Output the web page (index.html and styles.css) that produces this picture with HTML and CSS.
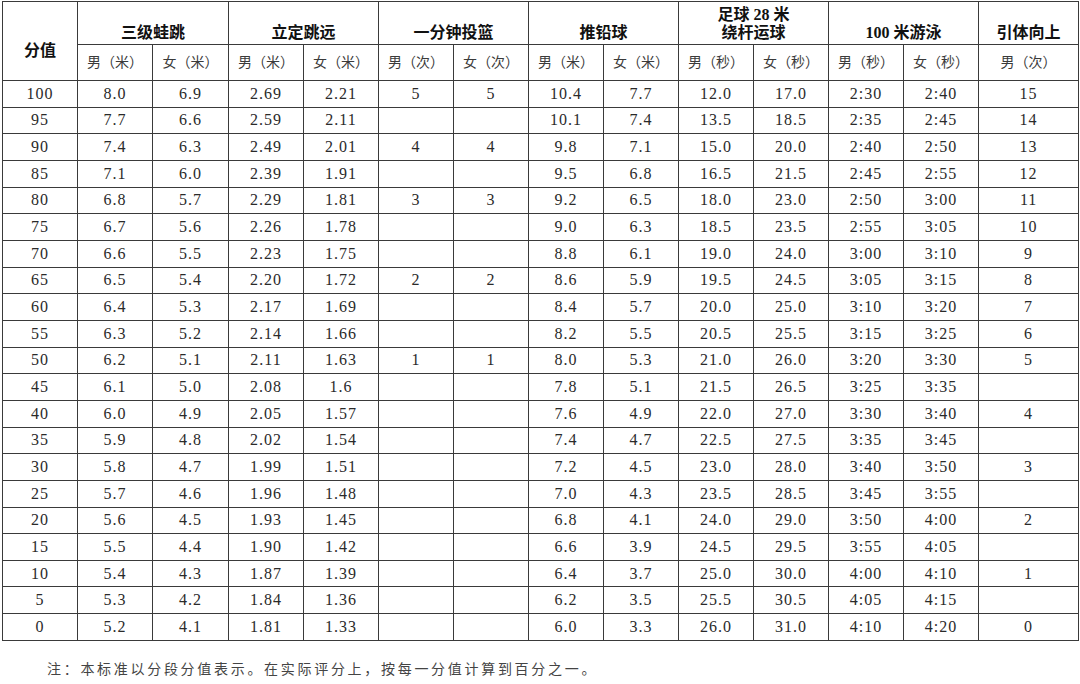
FILE: index.html
```html
<!DOCTYPE html>
<html lang="zh-CN">
<head>
<meta charset="utf-8">
<title>评分标准</title>
<link rel="stylesheet" href="styles.css">
</head>
<body>
<div class="page">
<table class="score">
  <colgroup>
    <col class="c75"><col class="c75"><col class="c76"><col class="c75"><col class="c75"><col class="c75"><col class="c75"><col class="c75"><col class="c75"><col class="c75"><col class="c75"><col class="c75"><col class="c75"><col class="c100">
  </colgroup>
  <thead>
    <tr class="h1">
      <th rowspan="2" class="fen">分值</th>
      <th colspan="2">三级蛙跳</th>
      <th colspan="2">立定跳远</th>
      <th colspan="2">一分钟投篮</th>
      <th colspan="2">推铅球</th>
      <th colspan="2">足球 28 米<br>绕杆运球</th>
      <th colspan="2">100 米游泳</th>
      <th>引体向上</th>
    </tr>
    <tr class="h2">
      <th>男（米）</th><th>女（米）</th>
      <th>男（米）</th><th>女（米）</th>
      <th>男（次）</th><th>女（次）</th>
      <th>男（米）</th><th>女（米）</th>
      <th>男（秒）</th><th>女（秒）</th>
      <th>男（秒）</th><th>女（秒）</th>
      <th>男（次）</th>
    </tr>
  </thead>
  <tbody>
    <tr><td>100</td><td>8.0</td><td>6.9</td><td>2.69</td><td>2.21</td><td>5</td><td>5</td><td>10.4</td><td>7.7</td><td>12.0</td><td>17.0</td><td>2:30</td><td>2:40</td><td>15</td></tr>
    <tr><td>95</td><td>7.7</td><td>6.6</td><td>2.59</td><td>2.11</td><td></td><td></td><td>10.1</td><td>7.4</td><td>13.5</td><td>18.5</td><td>2:35</td><td>2:45</td><td>14</td></tr>
    <tr><td>90</td><td>7.4</td><td>6.3</td><td>2.49</td><td>2.01</td><td>4</td><td>4</td><td>9.8</td><td>7.1</td><td>15.0</td><td>20.0</td><td>2:40</td><td>2:50</td><td>13</td></tr>
    <tr><td>85</td><td>7.1</td><td>6.0</td><td>2.39</td><td>1.91</td><td></td><td></td><td>9.5</td><td>6.8</td><td>16.5</td><td>21.5</td><td>2:45</td><td>2:55</td><td>12</td></tr>
    <tr><td>80</td><td>6.8</td><td>5.7</td><td>2.29</td><td>1.81</td><td>3</td><td>3</td><td>9.2</td><td>6.5</td><td>18.0</td><td>23.0</td><td>2:50</td><td>3:00</td><td>11</td></tr>
    <tr><td>75</td><td>6.7</td><td>5.6</td><td>2.26</td><td>1.78</td><td></td><td></td><td>9.0</td><td>6.3</td><td>18.5</td><td>23.5</td><td>2:55</td><td>3:05</td><td>10</td></tr>
    <tr><td>70</td><td>6.6</td><td>5.5</td><td>2.23</td><td>1.75</td><td></td><td></td><td>8.8</td><td>6.1</td><td>19.0</td><td>24.0</td><td>3:00</td><td>3:10</td><td>9</td></tr>
    <tr><td>65</td><td>6.5</td><td>5.4</td><td>2.20</td><td>1.72</td><td>2</td><td>2</td><td>8.6</td><td>5.9</td><td>19.5</td><td>24.5</td><td>3:05</td><td>3:15</td><td>8</td></tr>
    <tr><td>60</td><td>6.4</td><td>5.3</td><td>2.17</td><td>1.69</td><td></td><td></td><td>8.4</td><td>5.7</td><td>20.0</td><td>25.0</td><td>3:10</td><td>3:20</td><td>7</td></tr>
    <tr><td>55</td><td>6.3</td><td>5.2</td><td>2.14</td><td>1.66</td><td></td><td></td><td>8.2</td><td>5.5</td><td>20.5</td><td>25.5</td><td>3:15</td><td>3:25</td><td>6</td></tr>
    <tr><td>50</td><td>6.2</td><td>5.1</td><td>2.11</td><td>1.63</td><td>1</td><td>1</td><td>8.0</td><td>5.3</td><td>21.0</td><td>26.0</td><td>3:20</td><td>3:30</td><td>5</td></tr>
    <tr><td>45</td><td>6.1</td><td>5.0</td><td>2.08</td><td>1.6</td><td></td><td></td><td>7.8</td><td>5.1</td><td>21.5</td><td>26.5</td><td>3:25</td><td>3:35</td><td></td></tr>
    <tr><td>40</td><td>6.0</td><td>4.9</td><td>2.05</td><td>1.57</td><td></td><td></td><td>7.6</td><td>4.9</td><td>22.0</td><td>27.0</td><td>3:30</td><td>3:40</td><td>4</td></tr>
    <tr><td>35</td><td>5.9</td><td>4.8</td><td>2.02</td><td>1.54</td><td></td><td></td><td>7.4</td><td>4.7</td><td>22.5</td><td>27.5</td><td>3:35</td><td>3:45</td><td></td></tr>
    <tr><td>30</td><td>5.8</td><td>4.7</td><td>1.99</td><td>1.51</td><td></td><td></td><td>7.2</td><td>4.5</td><td>23.0</td><td>28.0</td><td>3:40</td><td>3:50</td><td>3</td></tr>
    <tr><td>25</td><td>5.7</td><td>4.6</td><td>1.96</td><td>1.48</td><td></td><td></td><td>7.0</td><td>4.3</td><td>23.5</td><td>28.5</td><td>3:45</td><td>3:55</td><td></td></tr>
    <tr><td>20</td><td>5.6</td><td>4.5</td><td>1.93</td><td>1.45</td><td></td><td></td><td>6.8</td><td>4.1</td><td>24.0</td><td>29.0</td><td>3:50</td><td>4:00</td><td>2</td></tr>
    <tr><td>15</td><td>5.5</td><td>4.4</td><td>1.90</td><td>1.42</td><td></td><td></td><td>6.6</td><td>3.9</td><td>24.5</td><td>29.5</td><td>3:55</td><td>4:05</td><td></td></tr>
    <tr><td>10</td><td>5.4</td><td>4.3</td><td>1.87</td><td>1.39</td><td></td><td></td><td>6.4</td><td>3.7</td><td>25.0</td><td>30.0</td><td>4:00</td><td>4:10</td><td>1</td></tr>
    <tr><td>5</td><td>5.3</td><td>4.2</td><td>1.84</td><td>1.36</td><td></td><td></td><td>6.2</td><td>3.5</td><td>25.5</td><td>30.5</td><td>4:05</td><td>4:15</td><td></td></tr>
    <tr><td>0</td><td>5.2</td><td>4.1</td><td>1.81</td><td>1.33</td><td></td><td></td><td>6.0</td><td>3.3</td><td>26.0</td><td>31.0</td><td>4:10</td><td>4:20</td><td>0</td></tr>
  </tbody>
</table>
<p class="note">注：本标准以分段分值表示。在实际评分上，按每一分值计算到百分之一。</p>
</div>
</body>
</html>
```

FILE: styles.css
```css
html, body {
  margin: 0;
  padding: 0;
  background: #ffffff;
}

.page {
  padding: 1px 0 0 2px;
  font-family: "Liberation Serif", "Noto Sans CJK SC", serif;
  color: #262626;
}

.score {
  border-collapse: collapse;
  table-layout: fixed;
  width: 1076px;
}

.c75 { width: 75px; }
.c76 { width: 76px; }
.c100 { width: 100px; }

.score th,
.score td {
  border: 1px solid #3a3a3a;
  padding: 0;
  text-align: center;
}

.h1 th {
  height: 40px;
  vertical-align: bottom;
  padding-bottom: 2px;
  font-size: 16px;
  line-height: 18px;
  font-weight: 700;
  color: #111;
}

.h1 th.fen {
  vertical-align: middle;
  padding: 20px 0 0 0;
}

.h2 th {
  height: 35px;
  font-size: 14px;
  font-weight: 400;
  line-height: 18px;
  color: #3a3a3a;
  vertical-align: middle;
}

.score tbody td {
  height: 25.67px;
  font-size: 16px;
  line-height: 18px;
  letter-spacing: 1px;
  color: #2a2a2a;
  vertical-align: middle;
}

.note {
  margin: 17px 0 0 45px;
  font-family: "Noto Sans CJK SC", sans-serif;
  font-size: 14px;
  line-height: 20px;
  letter-spacing: 2.7px;
  color: #444;
}
```
